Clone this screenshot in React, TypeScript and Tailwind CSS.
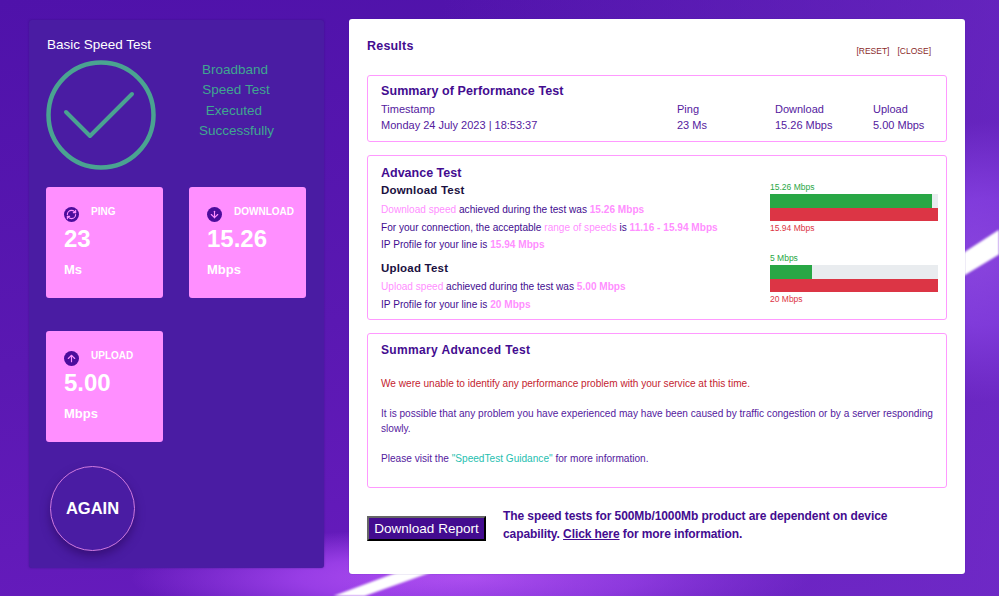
import { ArrowDown, ArrowUp, RefreshCw } from 'lucide-react';

const PINK = 'text-[#ff8fff]';

function Tile({ icon, label, value, unit }: { icon: React.ReactNode; label: string; value: string; unit: string }) {
    return (
        <div className="h-[111px] w-[117px] rounded-[3px] bg-[#ff8fff] pl-[18px] pt-[20px] font-bold text-white">
            <div className="flex items-start">
                <span className="flex h-[15px] w-[15px] items-center justify-center rounded-full bg-[#4b0d9c] text-[#ff8fff]">{icon}</span>
                <span className="ml-[12px] whitespace-nowrap text-[10px] leading-[10px]">{label}</span>
            </div>
            <div className="mt-[3px] text-[24px] leading-[27px]">{value}</div>
            <div className="mt-[8px] text-[13px] leading-[20px]">{unit}</div>
        </div>
    );
}

function Bars({ top, bottom, pct }: { top: string; bottom: string; pct: string }) {
    return (
        <div className="w-[168px]">
            <div className="text-[8.5px] leading-[10px] text-[#28a745]">{top}</div>
            <div className="mt-[2px] h-[14px] bg-[#e9ecef]">
                <div className={`h-full bg-[#28a745] ${pct}`} />
            </div>
            <div className="h-[13px] bg-[#dc3545]" />
            <div className="mt-[2px] text-[8.5px] leading-[10px] text-[#dc3545]">{bottom}</div>
        </div>
    );
}

export default function App() {
    return (
        <div className="relative h-[596px] w-[999px] overflow-hidden bg-[#5014ae] font-['Liberation_Sans',Arial,sans-serif]">
            {/* background wash */}
            <div className="absolute inset-0 bg-[radial-gradient(circle_140px_at_985px_262px,#b066ff_0%,#9a50f8_45%,rgba(122,50,220,0)_100%),radial-gradient(ellipse_340px_50px_at_470px_578px,#b553f5_0%,rgba(165,70,240,0.8)_50%,rgba(120,40,210,0)_100%),linear-gradient(172deg,#4f12aa_0%,#5a18b2_50%,#6a1cc0_100%)]" />
            <div className="absolute inset-0 bg-[linear-gradient(100deg,rgba(80,18,170,0)_40%,rgba(112,46,200,0.7)_100%)]" />
            <svg className="absolute inset-0 blur-[1px]" width="999" height="596" viewBox="0 0 999 596">
                <path d="M960 255 L1005 226 L1005 251 L960 278 Z" fill="#fff" />
                <path d="M398 572 L432 572 L359 598 L328 598 Z" fill="#fff" />
            </svg>

            <div className="relative flex items-start pl-[29px] pt-[19px]">
                <aside className="mt-[1px] h-[548px] w-[295px] rounded-[3px] bg-[#4a1ca3] pl-[17px] pt-[17px] shadow-[0_0_2px_rgba(40,10,110,0.5)]">
                    <div className="ml-[1px] text-[13.5px] leading-[16px] text-white">Basic Speed Test</div>
                    <div className="mt-[7px] flex">
                        <svg width="110" height="110" viewBox="0 0 110 110" fill="none" stroke="#4aa391">
                            <circle cx="55" cy="55" r="52.5" strokeWidth="4.5" />
                            <path d="M20 52 L44 76 L86 34" strokeWidth="4" strokeLinecap="round" strokeLinejoin="round" />
                        </svg>
                        <div className="ml-[43px] w-[75px] text-center text-[13.5px] leading-[20.4px] text-[#3fa690]">
                            <div className="-ml-[3px] whitespace-nowrap">Broadband</div>
                            <div className="-ml-[1px] whitespace-nowrap">Speed Test</div>
                            <div className="-ml-[5px] whitespace-nowrap">Executed</div>
                            <div className="whitespace-nowrap">Successfully</div>
                        </div>
                    </div>
                    <div className="mt-[17px] grid w-[260px] grid-cols-[117px_117px] gap-x-[26px] gap-y-[33px]">
                        <Tile icon={<RefreshCw size={11} strokeWidth={2.5} />} label="PING" value="23" unit="Ms" />
                        <Tile icon={<ArrowDown size={11} strokeWidth={2.5} />} label="DOWNLOAD" value="15.26" unit="Mbps" />
                        <Tile icon={<ArrowUp size={11} strokeWidth={2.5} />} label="UPLOAD" value="5.00" unit="Mbps" />
                    </div>
                    <button className="ml-[4px] mt-[24px] flex h-[85px] w-[85px] items-center justify-center rounded-full border-[1.5px] border-[#d07ae0] bg-[#4a1ca3] text-[16.5px] font-bold text-white shadow-[0_5px_10px_rgba(40,5,90,0.55)]">
                        AGAIN
                    </button>
                </aside>

                <main className="ml-[25px] h-[555px] w-[616px] rounded-[3px] bg-white pl-[18px] pr-[18px] pt-[20px] text-[#430c90] shadow-[0_0_1px_rgba(60,20,150,0.8)]">
                    <div className="flex items-start justify-between">
                        <h2 className="text-[12.5px] font-bold leading-[14px] tracking-[0.2px]">Results</h2>
                        <div className="mr-[16px] mt-[7px] flex gap-[8px] text-[8.5px] leading-[10px] text-[#8a2a2a]">
                            <span>[RESET]</span>
                            <span>[CLOSE]</span>
                        </div>
                    </div>

                    <section className="mt-[19px] h-[67px] rounded-[3px] border border-[#ff99ff] pl-[13px] pt-[8px]">
                        <h3 className="text-[12.5px] font-bold leading-[14px] tracking-[0.08px]">Summary of Performance Test</h3>
                        <div className="mt-[3px] grid grid-cols-[296px_98px_98px_1fr] text-[11px] leading-[16px] text-[#54209e]">
                            <div>Timestamp<br />Monday 24 July 2023 | 18:53:37</div>
                            <div>Ping<br />23 Ms</div>
                            <div>Download<br />15.26 Mbps</div>
                            <div>Upload<br />5.00 Mbps</div>
                        </div>
                    </section>

                    <section className="mt-[13px] flex h-[165px] rounded-[3px] border border-[#ff99ff] pl-[13px] pt-[10px]">
                        <div className="w-[389px]">
                            <h3 className="text-[12.5px] font-bold leading-[14px]">Advance Test</h3>
                            <h4 className="mt-[3px] text-[11.5px] font-bold leading-[14px] tracking-[0.2px] text-[#1a1040]">Download Test</h4>
                            <div className="mt-[4px] whitespace-nowrap text-[10.1px] leading-[17.7px] text-[#430c90]">
                                <div><span className={PINK}>Download speed</span> achieved during the test was <b className={PINK}>15.26 Mbps</b></div>
                                <div>For your connection, the acceptable <span className={PINK}>range of speeds</span> is <b className={PINK}>11.16 - 15.94 Mbps</b></div>
                                <div>IP Profile for your line is <b className={PINK}>15.94 Mbps</b></div>
                            </div>
                            <h4 className="mt-[7px] text-[11.5px] font-bold leading-[14px] tracking-[0.2px] text-[#1a1040]">Upload Test</h4>
                            <div className="mt-[3px] whitespace-nowrap text-[10.1px] leading-[17.7px] text-[#430c90]">
                                <div><span className={PINK}>Upload speed</span> achieved during the test was <b className={PINK}>5.00 Mbps</b></div>
                                <div>IP Profile for your line is <b className={PINK}>20 Mbps</b></div>
                            </div>
                        </div>
                        <div className="pt-[16px]">
                            <Bars top="15.26 Mbps" bottom="15.94 Mbps" pct="w-[96.5%]" />
                            <div className="mt-[20px]">
                                <Bars top="5 Mbps" bottom="20 Mbps" pct="w-[25%]" />
                            </div>
                        </div>
                    </section>

                    <section className="mt-[13px] h-[155px] rounded-[3px] border border-[#ff99ff] pl-[13px] pr-[10px] pt-[9px]">
                        <h3 className="text-[12px] font-bold leading-[14px] tracking-[0.35px]">Summary Advanced Test</h3>
                        <div className="mt-[19px] text-[10.1px] leading-[15px]">
                            <p className="text-[#c4242f]">We were unable to identify any performance problem with your service at this time.</p>
                            <p className="mt-[15px] text-[#54209e]">It is possible that any problem you have experienced may have been caused by traffic congestion or by a server responding slowly.</p>
                            <p className="mt-[15px] text-[#54209e]">Please visit the <span className="text-[#1fc0b0]">"SpeedTest Guidance"</span> for more information.</p>
                        </div>
                    </section>

                    <div className="mt-[18px] flex items-start">
                        <button className="mt-[10px] h-[25px] w-[119px] whitespace-nowrap border-2 border-b-black border-l-[#666] border-r-black border-t-[#666] bg-[#430c90] text-[13.5px] leading-[20px] text-white">
                            Download Report
                        </button>
                        <p className="ml-[17px] w-[400px] pt-[1px] text-[12px] font-bold leading-[18px] tracking-[-0.09px]">
                            The speed tests for 500Mb/1000Mb product are dependent on device capability. <u>Click here</u> for more information.
                        </p>
                    </div>
                </main>
            </div>
        </div>
    );
}
